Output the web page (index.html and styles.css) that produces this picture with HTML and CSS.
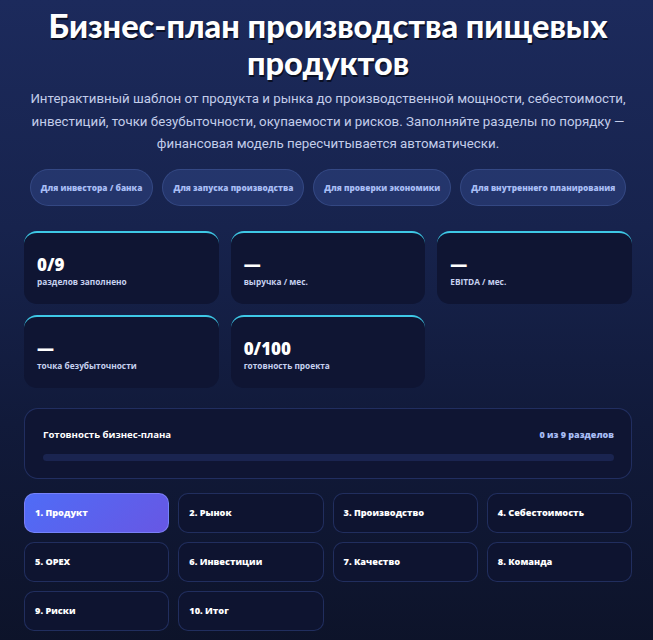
FILE: index.html
```html
<!DOCTYPE html>
<html lang="ru">
<head>
<meta charset="utf-8">
<title>Бизнес-план производства пищевых продуктов</title>
<link rel="stylesheet" href="styles.css">
</head>
<body>
<div class="page">
  <header class="hero">
    <h1 class="title">Бизнес-план производства пищевых продуктов</h1>
    <p class="lead">Интерактивный шаблон от продукта и рынка до производственной мощности, себестоимости, инвестиций, точки безубыточности, окупаемости и рисков. Заполняйте разделы по порядку — финансовая модель пересчитывается автоматически.</p>
    <div class="chips">
      <span class="chip">Для инвестора / банка</span>
      <span class="chip">Для запуска производства</span>
      <span class="chip">Для проверки экономики</span>
      <span class="chip">Для внутреннего планирования</span>
    </div>
  </header>

  <section class="stats">
    <div class="stat"><div class="stat-value">0/9</div><div class="stat-label">разделов заполнено</div></div>
    <div class="stat"><div class="stat-value">—</div><div class="stat-label">выручка / мес.</div></div>
    <div class="stat"><div class="stat-value">—</div><div class="stat-label">EBITDA / мес.</div></div>
    <div class="stat"><div class="stat-value">—</div><div class="stat-label">точка безубыточности</div></div>
    <div class="stat"><div class="stat-value">0/100</div><div class="stat-label">готовность проекта</div></div>
  </section>

  <section class="progress-card">
    <div class="progress-head">
      <span class="progress-title">Готовность бизнес-плана</span>
      <span class="progress-count">0 из 9 разделов</span>
    </div>
    <div class="progress-track"><div class="progress-fill" style="width:0%"></div></div>
  </section>

  <nav class="tabs">
    <button class="tab active">1. Продукт</button>
    <button class="tab">2. Рынок</button>
    <button class="tab">3. Производство</button>
    <button class="tab">4. Себестоимость</button>
    <button class="tab">5. OPEX</button>
    <button class="tab">6. Инвестиции</button>
    <button class="tab">7. Качество</button>
    <button class="tab">8. Команда</button>
    <button class="tab">9. Риски</button>
    <button class="tab">10. Итог</button>
  </nav>
</div>
</body>
</html>
```

FILE: styles.css
```css
* { box-sizing: border-box; }
html, body { margin: 0; }
body {
  min-height: 640px;
  background: linear-gradient(180deg, #1c2a5c 0%, #17234d 35%, #111a3a 65%, #0d1329 100%);
  font-family: "Open Sans", "Noto Sans", sans-serif;
  color: #fff;
}
.page {
  padding: 7px 21px 20px 24px;
}
.hero { text-align: center; }
.title {
  margin: 0 -10px;
  font-family: Lato, "Open Sans", sans-serif;
  font-weight: 900;
  font-size: 32.5px;
  line-height: 37px;
  letter-spacing: 0;
  color: #fff;
  text-shadow: 1px 2px 0 rgba(0, 0, 0, 0.6);
}
.lead {
  margin: 7px 0 0;
  font-family: Roboto, sans-serif;
  font-size: 13.3px;
  line-height: 22.5px;
  color: #c3cdea;
}
.chips {
  display: flex;
  justify-content: center;
  gap: 9px;
  margin-top: 13px;
}
.chip {
  display: inline-flex;
  align-items: center;
  height: 37px;
  padding: 0 10px;
  border-radius: 19px;
  background: rgba(60, 85, 160, 0.35);
  border: 1px solid rgba(110, 140, 220, 0.22);
  color: #a8bdf5;
  font-size: 8.3px;
  font-weight: 800;
  white-space: nowrap;
}
.stats {
  display: grid;
  grid-template-columns: repeat(3, 1fr);
  column-gap: 12px;
  row-gap: 11px;
  margin-top: 25px;
}
.stat {
  height: 73px;
  border-radius: 13px;
  background: #0f1533;
  border-top: 2px solid #3ec8e6;
  padding: 22px 13px 0;
}
.stat-value {
  font-size: 17px;
  font-weight: 800;
  line-height: 20px;
  color: #fff;
}
.stat-label {
  margin-top: 1px;
  font-size: 8.3px;
  font-weight: 700;
  color: #c7d1f0;
}
.progress-card {
  margin-top: 20px;
  height: 71px;
  border-radius: 14px;
  background: #0f1533;
  border: 1px solid rgba(70, 95, 180, 0.35);
  padding: 19px 17px 0 18px;
}
.progress-head {
  display: flex;
  justify-content: space-between;
  align-items: center;
}
.progress-title {
  font-size: 9.6px;
  font-weight: 700;
  color: #fff;
}
.progress-count {
  font-size: 9px;
  font-weight: 800;
  color: #a8bdf5;
}
.progress-track {
  margin-top: 13px;
  height: 7px;
  border-radius: 4px;
  background: #1a2450;
  overflow: hidden;
}
.progress-fill { height: 100%; background: #5b6cf0; }
.tabs {
  margin-top: 14px;
  display: grid;
  grid-template-columns: repeat(4, 1fr);
  gap: 9px;
}
.tab {
  height: 40px;
  border-radius: 10px;
  background: #0e1430;
  border: 1px solid rgba(70, 95, 180, 0.35);
  color: #fff;
  font-family: "Open Sans", sans-serif;
  font-size: 9.2px;
  font-weight: 800;
  text-align: left;
  padding: 0 10px;
}
.tab.active {
  background: linear-gradient(135deg, #4f6cf6 0%, #6757e4 100%);
  border-color: rgba(140, 150, 255, 0.6);
}
```
